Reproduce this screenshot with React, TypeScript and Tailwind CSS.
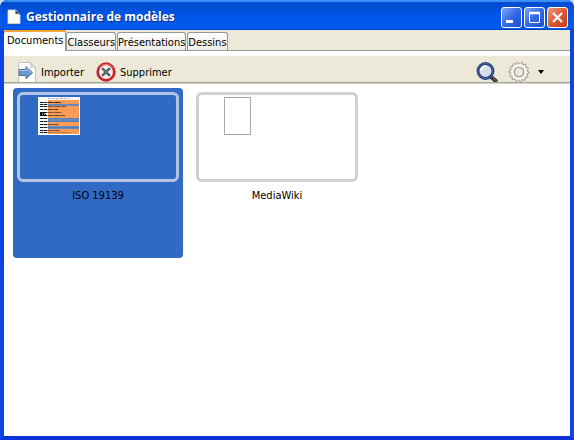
import { useState } from "react";
import type { ReactNode } from "react";

const tabs = ["Documents", "Classeurs", "Présentations", "Dessins"];

function PageIcon() {
  return (
    <svg viewBox="0 0 14 16" className="h-4 w-3.5 shrink-0" aria-hidden="true">
      <path d="M1 1h8l4 5v9H1z" fill="#fdfdf8" stroke="#d8dce0" strokeWidth="0.8" />
      <path d="M8.500 1l4.500 5c-1-1.500-3-1.500-4.500-1z" fill="#2a2a2a" />
      <path d="M1 15.300h12" stroke="#17419a" />
    </svg>
  );
}

function ImportIcon() {
  return (
    <svg viewBox="0 0 18 20" className="h-5 w-[18px]" aria-hidden="true">
      <path d="M.5 20V1Q.5.500 1 .5h11l5.500 5.500v14" fill="#fcfcfb" stroke="#c3c3bd" />
      <path d="M12 .5c1 1.500 1 3 .5 5 2-.5 4-.3 5 .5z" fill="#e5e5e2" stroke="#b9b9b3" strokeWidth="0.700" />
      <path d="M1 7.500h7V4.700l6.500 6-6.500 6v-3.200H1z" fill="#6d97c9" stroke="#4d74a8" />
      <path d="M1.500 8.500h7.500V7l4 3.700" fill="none" stroke="#a8c6e8" />
    </svg>
  );
}

function DeleteIcon() {
  return (
    <svg viewBox="0 0 20 20" className="size-5" aria-hidden="true">
      <circle cx="10" cy="10" r="8.300" fill="#f7f5f2" stroke="#d0222b" strokeWidth="2.800" />
      <path d="M3 6a8.500 8.500 0 0 1 14 0" fill="none" stroke="#ec7272" />
      <path d="M6.800 6.800l6.400 6.400m0-6.400l-6.400 6.400" stroke="#505a67" strokeWidth="2.600" strokeLinecap="round" />
      <path d="M7 7l6 6m0-6l-6 6" stroke="#79818b" strokeWidth="0.800" />
    </svg>
  );
}

function SearchIcon() {
  return (
    <svg viewBox="0 0 22 20" className="h-5 w-[22px]" aria-hidden="true">
      <path d="M14 14l7 6" stroke="#353535" strokeWidth="4" />
      <path d="M15 14l6 5.500" stroke="#8b8b86" strokeWidth="0.800" />
      <circle cx="9.500" cy="9" r="7.500" fill="#d5dfe9" stroke="#233e7c" strokeWidth="2.800" />
      <circle cx="9.500" cy="9" r="7.500" fill="none" stroke="#5877b5" strokeWidth="0.700" />
      <path d="M5 9a4.500 4.500 0 0 1 5-4.500" fill="none" stroke="#fff" strokeWidth="1.800" />
    </svg>
  );
}

function GearIcon() {
  const outline = Array.from({ length: 56 }, (_, i) => {
    const angle = (i / 56) * Math.PI * 2;
    const radius = i % 4 < 2 ? 10.5 : 8.8;
    return `${i ? "L" : "M"}${(11 + radius * Math.cos(angle)).toFixed(2)} ${(10.5 + radius * Math.sin(angle)).toFixed(2)}`;
  }).join("");
  return (
    <svg viewBox="0 0 22 21" className="h-5 w-[22px]" aria-hidden="true">
      <path d={`${outline}Z`} fill="#f4f1ec" stroke="#988d8a" strokeWidth="1" />
      <circle cx="11" cy="10.500" r="5" fill="#ece9d8" stroke="#988d8a" strokeWidth="1.200" />
      <circle cx="11" cy="10.500" r="6.400" fill="none" stroke="#fff" strokeWidth="0.800" />
    </svg>
  );
}

function WindowButton({ label, close = false, children }: { label: string; close?: boolean; children: ReactNode }) {
  return (
    <button
      type="button"
      aria-label={label}
      className={`size-[21px] rounded-[3px] border border-white bg-linear-to-br ${close ? "from-[#ee9880] via-[#dd5733] to-[#c63c17]" : "from-[#7fa5f5] via-[#3469e6] to-[#1d4fd0]"}`}
    >
      <svg viewBox="0 0 19 19" className="size-full" fill="none" stroke="white" aria-hidden="true">
        {children}
      </svg>
    </button>
  );
}

const stripes = [
  [5, 13, "#222"], [7, 26, "#6b86ae"], [9, 18, "#845232"], [12, 10, "#593820"],
  [15, 14, "#7d4d2c"], [18, 17, "#6a4430"], [21, 32, "#5d7eae"], [24, 32, "#4777b8"],
  [27, 10, "#624331"], [30, 32, "#537bb2"], [33, 12, "#704a35"], [35, 22, "#be753f"],
] as const;

function IsoThumbnail() {
  return (
    <svg viewBox="0 0 42 38" className="h-[38px] w-[42px]" aria-hidden="true">
      <path d="M0 0h42v38H0z" fill="#fafafa" />
      <path d="M10 3h31v34H10z" fill="#f79b55" />
      <path d="M10 1.500h22" stroke="#aaa" strokeWidth="0.800" strokeDasharray="3 1" />
      <path d="M10 7h31v2H10zM10 21h31v4H10zM10 29h31v3H10z" fill="#648cc0" />
      {stripes.map(([y, width, color]) => (
        <g key={y}>
          <path d={`M2 ${y}.500h8`} stroke="#171717" strokeWidth="1.200" strokeDasharray="3 .4 4 .6" />
          <path d={`M10 ${y}.500h${Math.min(width, 31)}`} stroke={color} strokeDasharray="4 .5 2 .5" />
        </g>
      ))}
      <path d="M2 16h5m-5 2h6" stroke="#111" strokeWidth="2" strokeDasharray="2 .5" />
    </svg>
  );
}

function Template({ name, selected, onSelect, children }: { name: string; selected: boolean; onSelect: () => void; children: ReactNode }) {
  return (
    <button
      type="button"
      aria-pressed={selected}
      onClick={onSelect}
      className={`flex h-[170px] w-[170px] flex-col rounded p-1 ${selected ? "bg-[#316ac5]" : "bg-white"}`}
    >
      <span className={`flex h-[90px] w-full rounded-md border-3 pt-0.5 ${selected ? "border-[#b3c4e3] pl-[18px]" : "border-[#cfcfcf] pl-[25px]"}`}>
        {children}
      </span>
      <span className="mt-1.5 w-full text-center leading-4">{name}</span>
    </button>
  );
}

export default function App() {
  const [tab, setTab] = useState("Documents");
  const [selected, setSelected] = useState("ISO 19139");
  return (
    <div className="min-h-screen bg-[#c8d9f2] font-['DejaVu_Sans_Condensed','Noto_Sans',sans-serif] text-[11px] text-black">
      <main className="flex min-h-screen flex-col overflow-hidden rounded-t-lg bg-[#0831d9]">
        <header className="flex h-[30px] items-center bg-linear-to-b from-[#0048c8] via-[#0055e5] to-[#005cf5] pt-1 pr-1.5 pl-[7px] shadow-[inset_0_2px_1px_#3c92fb,inset_0_-1px_1px_#0044c4]">
          <PageIcon />
          <h1 className="ml-[5px] flex-1 font-['Open_Sans',sans-serif] text-[12px] font-bold text-white [text-shadow:1px_1px_#102b80]">Gestionnaire de modèles</h1>
          <div className="flex gap-0.5">
            <WindowButton label="Réduire"><path d="M4 13.500h7" strokeWidth="3" /></WindowButton>
            <WindowButton label="Agrandir"><path d="M4.500 5v9.500h10V5z" /><path d="M4 5h11" strokeWidth="2.500" /></WindowButton>
            <WindowButton label="Fermer" close><path d="M5 5l9 9m0-9l-9 9" strokeWidth="2.200" /></WindowButton>
          </div>
        </header>
        <div className="flex flex-1 flex-col border-x-4 border-b-4 border-x-[#0b45e6] border-b-[#0831d9] bg-white">
          <div role="tablist" className="flex h-[21px] items-end border-b border-[#919b9c] bg-[#ece9d8]">
            {tabs.map((item) => (
              <button
                key={item}
                type="button"
                role="tab"
                aria-selected={tab === item}
                onClick={() => setTab(item)}
                className={`whitespace-nowrap ${
                  tab === item
                    ? "-mb-px h-[21px] rounded-t-xs bg-white px-[3px] pt-0.5 shadow-[inset_0_2px_#f5a536,inset_-1px_0_#919b9c]"
                    : "mr-px h-[18px] rounded-t-[3px] border-x border-t border-[#919b9c] bg-linear-to-b from-white to-[#eeede5] pt-0.5"
                }`}
              >
                {item}
              </button>
            ))}
          </div>
          <div className="mt-[5px] flex h-7 items-start overflow-hidden border-b border-[#d8d5c5] bg-[#ece9d8] shadow-[inset_0_-1px_#a5a395]">
            <div role="toolbar" aria-label="Modèles" className="flex flex-1 items-center pt-1.5 pr-[26px] pl-3.5">
              <button type="button" className="flex items-center gap-[5px]"><ImportIcon /><span className="pt-0.5">Importer</span></button>
              <button type="button" className="ml-3 flex items-center gap-1"><DeleteIcon /><span className="pt-0.5">Supprimer</span></button>
              <button type="button" aria-label="Rechercher" className="ml-auto"><SearchIcon /></button>
              <button type="button" aria-label="Menu Action" className="ml-2.5 flex items-center gap-2">
                <GearIcon />
                <svg viewBox="0 0 6 4" className="h-1 w-1.5" aria-hidden="true"><path d="M0 0h6L3 4z" /></svg>
              </button>
            </div>
          </div>
          <section aria-label={tab} className="flex flex-1 flex-wrap content-start gap-[9px] bg-white pt-1 pl-[9px]">
            <Template name="ISO 19139" selected={selected === "ISO 19139"} onSelect={() => setSelected("ISO 19139")}>
              <IsoThumbnail />
            </Template>
            <Template name="MediaWiki" selected={selected === "MediaWiki"} onSelect={() => setSelected("MediaWiki")}>
              <span className="h-[38px] w-[27px] border border-[#aaa] bg-white" />
            </Template>
          </section>
        </div>
      </main>
    </div>
  );
}
